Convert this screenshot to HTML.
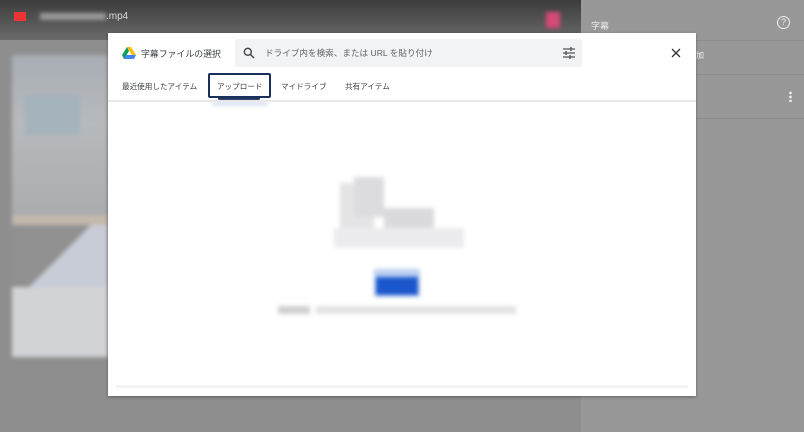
<!DOCTYPE html>
<html><head><meta charset="utf-8"><style>
*{margin:0;padding:0;box-sizing:border-box}
body{width:804px;height:432px;overflow:hidden;background:#8e8e8e;font-family:"Liberation Sans","Noto Sans CJK JP",sans-serif;position:relative}
.top{position:absolute;left:0;top:0;width:581px;height:40px;background:linear-gradient(#3c3c3c,#6a6a6a)}
.right{position:absolute;left:581px;top:0;width:223px;height:432px;background:#989898}
.px{position:absolute}
.dlg{position:absolute;left:108px;top:33px;width:588px;height:363px;background:#fff;box-shadow:0 1px 3px rgba(0,0,0,.35)}
.t{position:absolute;font-size:10px;color:#3c4043;white-space:nowrap}
.b{filter:blur(2px)}
</style></head><body>
<div class="top"></div>
<div class="px" style="left:14px;top:12px;width:12px;height:9px;background:#e33"></div>
<div class="px b" style="left:40px;top:13px;width:66px;height:7px;background:#9a9a9a"></div>
<div class="t" style="left:106px;top:11px;color:#ddd;font-size:10px">.mp4</div>
<div class="px b" style="left:546px;top:12px;width:14px;height:16px;background:#d64a78"></div>
<div class="right"></div>
<div class="t" style="left:591px;top:19px;color:#eee;font-size:9px">字幕</div>
<div class="px" style="left:777px;top:16px;width:13px;height:13px;border:1.5px solid #eee;border-radius:50%;color:#eee;font-size:9px;text-align:center;line-height:10px">?</div>
<div class="px" style="left:581px;top:40px;width:223px;height:1px;background:#8c8c8c"></div>
<div class="t" style="left:696px;top:50px;color:#eee;font-size:8px">加</div>
<div class="px" style="left:581px;top:74px;width:223px;height:1px;background:#8c8c8c"></div>
<div class="px" style="left:789px;top:91px;width:3px;height:11px;background:radial-gradient(circle,#eee 1.2px,transparent 1.5px) 0 0/3px 4px"></div>
<div class="px" style="left:581px;top:118px;width:223px;height:1px;background:#8c8c8c"></div>
<div class="b" style="position:absolute;left:0;top:0">
<div class="px" style="left:12px;top:55px;width:96px;height:170px;background:linear-gradient(#a8adb3,#b7babd 40%,#a9acae)"></div>
<div class="px" style="left:25px;top:95px;width:55px;height:40px;background:#a5b3bd"></div>
<div class="px" style="left:12px;top:215px;width:96px;height:10px;background:#c5b8ad"></div>
<div class="px" style="left:12px;top:225px;width:96px;height:62px;background:linear-gradient(135deg,#909090 50%,#c8ccd6 50%)"></div>
<div class="px" style="left:12px;top:287px;width:96px;height:70px;background:#d2d3d6"></div>
</div>
<div class="dlg">
<svg style="position:absolute;left:14px;top:14px" width="14" height="12" viewBox="0 0 14 12"><path d="M5 0h4l5 8H10z" fill="#fbbc04"/><path d="M5 0L0 8l2 4 5-8z" fill="#0f9d58"/><path d="M2 12h10l2-4H4z" fill="#4285f4"/></svg>
<div class="t" style="left:33px;top:14px;font-size:8.9px">字幕ファイルの選択</div>
<div class="px" style="left:127px;top:6px;width:347px;height:28px;background:#f1f3f4;border-radius:2px"></div>
<svg style="position:absolute;left:135px;top:14px" width="12" height="12" viewBox="0 0 12 12"><circle cx="4.8" cy="4.8" r="3.5" fill="none" stroke="#444" stroke-width="1.4"/><path d="M7.5 7.5L11 11" stroke="#444" stroke-width="1.5"/></svg>
<div class="t" style="left:157px;top:14px;font-size:8.6px;color:#5f6368">ドライブ内を検索、または URL を貼り付け</div>
<svg style="position:absolute;left:455px;top:14px" width="12" height="12" viewBox="0 0 12 12"><path d="M0 2h12M0 6h12M0 10h12" stroke="#555" stroke-width="1.2"/><path d="M8 0v4M3 4v4M7 8v4" stroke="#555" stroke-width="1.4"/></svg>
<svg style="position:absolute;left:563px;top:15px" width="10" height="10" viewBox="0 0 10 10"><path d="M1 1l8 8M9 1l-8 8" stroke="#333" stroke-width="1.3"/></svg>
<div class="t" style="left:14px;top:48px;font-size:7.6px">最近使用したアイテム</div>
<div class="px" style="left:100px;top:40px;width:63px;height:25px;border:2px solid #1a2f5c;border-radius:2px"></div>
<div class="t" style="left:109px;top:48px;font-size:7.6px">アップロード</div>
<div class="px" style="left:110px;top:64px;width:42px;height:3px;background:#1a2f5c;border-radius:2px"></div>
<div class="px b" style="left:104px;top:69px;width:56px;height:3px;background:#c6d3ea"></div>
<div class="t" style="left:173px;top:48px;font-size:7.6px">マイドライブ</div>
<div class="t" style="left:237px;top:48px;font-size:7.6px">共有アイテム</div>
<div class="px" style="left:0;top:67px;width:588px;height:2px;background:#e8e8e8"></div>
<div class="px" style="left:8px;top:352px;width:572px;height:3px;background:#f3f3f3"></div>
<div class="b" style="position:absolute;left:0;top:0">
<div class="px" style="left:232px;top:150px;width:34px;height:50px;background:#e4e4e6"></div>
<div class="px" style="left:246px;top:144px;width:30px;height:40px;background:#dcdcde"></div>
<div class="px" style="left:276px;top:175px;width:50px;height:30px;background:#dadadc"></div>
<div class="px" style="left:226px;top:195px;width:130px;height:20px;background:#ececee"></div>
<div class="px" style="left:266px;top:236px;width:46px;height:28px;background:#bcd0f0"></div>
<div class="px" style="left:268px;top:244px;width:42px;height:18px;background:#1a56cc"></div>
<div class="px" style="left:170px;top:273px;width:32px;height:8px;background:#cfcfcf"></div>
<div class="px" style="left:208px;top:273px;width:200px;height:8px;background:#e2e2e2"></div>
</div>
</div>
</body></html>
